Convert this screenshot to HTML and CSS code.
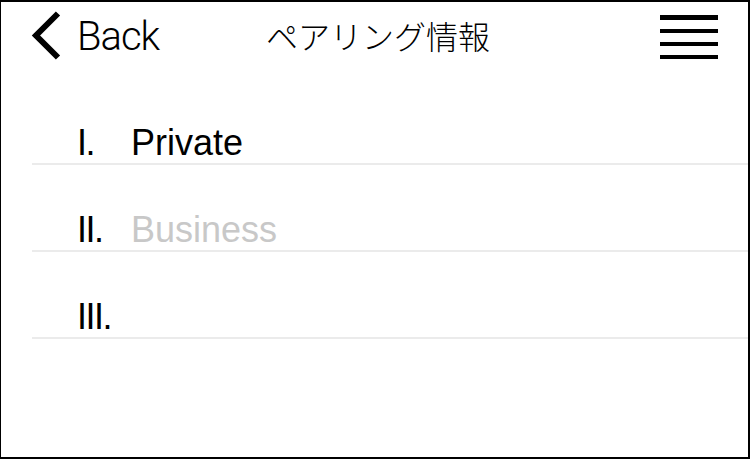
FILE: index.html
```html
<!DOCTYPE html>
<html lang="ja">
<head>
<meta charset="utf-8">
<title>ペアリング情報</title>
<link rel="stylesheet" href="styles.css">
</head>
<body>
<div class="screen">
  <header class="topbar">
    <a class="back" href="#">
      <svg class="chevron" width="32" height="50" viewBox="0 0 32 50" aria-hidden="true">
        <path d="M28 2.5 L6 24.5 L28 46.5" fill="none" stroke="#000" stroke-width="6" stroke-linejoin="miter"/>
      </svg>
      <span class="back-label">Back</span>
    </a>
    <h1 class="title">ペアリング情報</h1>
    <div class="menu" aria-label="Menu">
      <span class="bar bar-first"></span>
      <span class="bar"></span>
      <span class="bar"></span>
      <span class="bar"></span>
    </div>
  </header>
  <ul class="list">
    <li class="row"><span class="num">I.</span><span class="name">Private</span></li>
    <li class="row"><span class="num">II.</span><span class="name name-muted">Business</span></li>
    <li class="row"><span class="num">III.</span><span class="name"></span></li>
  </ul>
</div>
</body>
</html>
```
FILE: styles.css
```css
html, body {
  margin: 0;
  padding: 0;
  background: #fff;
}

.screen {
  box-sizing: border-box;
  width: 750px;
  height: 459px;
  border-top: 2px solid #000;
  border-left: 1px solid #000;
  border-right: 2px solid #000;
  border-bottom: 2px solid #000;
  background: #fff;
  overflow: hidden;
  font-family: "Liberation Sans", Arial, sans-serif;
  color: #000;
}

.topbar {
  height: 76px;
  display: grid;
  grid-template-columns: 1fr auto 1fr;
  align-items: start;
  padding: 0 30px 0 29px;
}

.back {
  display: flex;
  align-items: center;
  height: 50px;
  margin-top: 9px;
  color: #000;
  text-decoration: none;
  justify-self: start;
}

.chevron {
  display: block;
  flex: none;
}

.back-label {
  margin-left: 15px;
  padding-top: 2px;
  font-family: Roboto, "Liberation Sans", sans-serif;
  font-weight: 300;
  font-size: 40px;
  line-height: 40px;
  letter-spacing: -1px;
}

.title {
  margin: 17px 0 0 8px;
  font-family: "Noto Sans CJK JP", "Noto Sans", sans-serif;
  font-weight: 300;
  font-size: 32px;
  line-height: 32px;
  white-space: nowrap;
}

.menu {
  justify-self: end;
  margin-top: 13px;
  width: 58px;
  display: flex;
  flex-direction: column;
  gap: 9px;
}

.bar {
  display: block;
  height: 4px;
  background: #000;
}

.bar-first {
  height: 5px;
}

.list {
  list-style: none;
  margin: 0 0 0 31px;
  padding: 0;
}

.row {
  display: flex;
  align-items: flex-end;
  height: 85px;
  border-bottom: 2px solid #ebebeb;
  padding-left: 45px;
  font-size: 36px;
  line-height: 40px;
}

.num {
  width: 54px;
  flex: none;
  letter-spacing: -1.5px;
}

.name-muted {
  color: #c8c8c8;
}
```
